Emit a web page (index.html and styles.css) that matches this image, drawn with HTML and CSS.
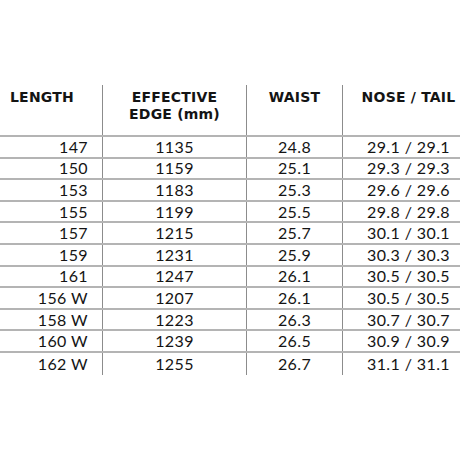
FILE: index.html
```html
<!DOCTYPE html>
<html>
<head>
<meta charset="utf-8">
<link rel="stylesheet" href="styles.css">
</head>
<body>
<div class="table">
  <div class="row head">
    <div class="cell c1">LENGTH</div>
    <div class="cell c2">EFFECTIVE<br>EDGE (mm)</div>
    <div class="cell c3">WAIST</div>
    <div class="cell c4">NOSE / TAIL</div>
  </div>
  <div class="row"><div class="cell c1">147</div><div class="cell c2">1135</div><div class="cell c3">24.8</div><div class="cell c4">29.1 / 29.1</div></div>
  <div class="row"><div class="cell c1">150</div><div class="cell c2">1159</div><div class="cell c3">25.1</div><div class="cell c4">29.3 / 29.3</div></div>
  <div class="row"><div class="cell c1">153</div><div class="cell c2">1183</div><div class="cell c3">25.3</div><div class="cell c4">29.6 / 29.6</div></div>
  <div class="row"><div class="cell c1">155</div><div class="cell c2">1199</div><div class="cell c3">25.5</div><div class="cell c4">29.8 / 29.8</div></div>
  <div class="row"><div class="cell c1">157</div><div class="cell c2">1215</div><div class="cell c3">25.7</div><div class="cell c4">30.1 / 30.1</div></div>
  <div class="row"><div class="cell c1">159</div><div class="cell c2">1231</div><div class="cell c3">25.9</div><div class="cell c4">30.3 / 30.3</div></div>
  <div class="row"><div class="cell c1">161</div><div class="cell c2">1247</div><div class="cell c3">26.1</div><div class="cell c4">30.5 / 30.5</div></div>
  <div class="row"><div class="cell c1">156 W</div><div class="cell c2">1207</div><div class="cell c3">26.1</div><div class="cell c4">30.5 / 30.5</div></div>
  <div class="row"><div class="cell c1">158 W</div><div class="cell c2">1223</div><div class="cell c3">26.3</div><div class="cell c4">30.7 / 30.7</div></div>
  <div class="row"><div class="cell c1">160 W</div><div class="cell c2">1239</div><div class="cell c3">26.5</div><div class="cell c4">30.9 / 30.9</div></div>
  <div class="row last"><div class="cell c1">162 W</div><div class="cell c2">1255</div><div class="cell c3">26.7</div><div class="cell c4">31.1 / 31.1</div></div>
</div>
</body>
</html>
```
FILE: styles.css
```css
html, body {
  margin: 0;
  padding: 0;
  background: #ffffff;
}
body {
  width: 460px;
  height: 460px;
  overflow: hidden;
  color: #141414;
  font-family: "Lato", "Liberation Sans", sans-serif;
}
.table {
  padding-top: 85px;
}
.row {
  display: grid;
  grid-template-columns: 102px 144px 96px 1fr;
  box-sizing: border-box;
  height: 21.6px;
  border-bottom: 2px solid #b4b4b4;
  font-size: 16px;
  letter-spacing: 0.4px;
}
.row.last {
  height: 22px;
  border-bottom: none;
}
.cell {
  display: flex;
  align-items: center;
  justify-content: center;
  white-space: nowrap;
  line-height: 18px;
}
.c2, .c3, .c4 {
  border-left: 1px solid #8c8c8c;
}
.c1 {
  justify-content: flex-end;
  padding-right: 14px;
}
.c4 {
  padding-left: 14px;
}
.head {
  height: 52px;
  font-family: "DejaVu Sans", "Liberation Sans", sans-serif;
  font-weight: bold;
  font-size: 14px;
  letter-spacing: 0.2px;
}
.head .cell {
  align-items: flex-start;
  padding-top: 4px;
  line-height: 17px;
  text-align: center;
}
.head .c1 {
  justify-content: flex-start;
  padding-left: 10px;
  padding-right: 0;
}
```
